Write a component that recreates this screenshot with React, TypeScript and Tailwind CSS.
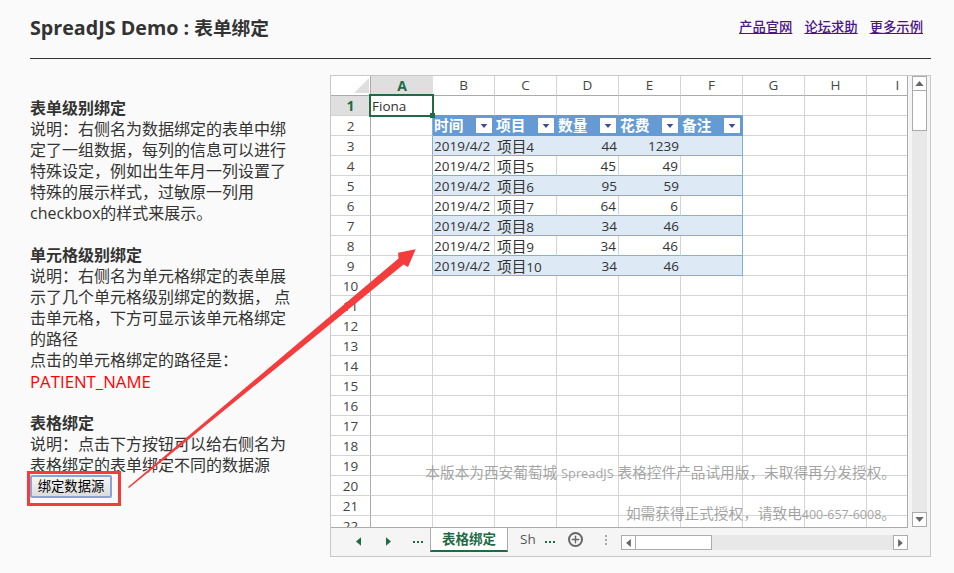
import { Plus } from "lucide-react";

const columns = ["A", "B", "C", "D", "E", "F", "G", "H", "I"];

const tableRows = [
  ["4", "44", "1239"],
  ["5", "45", "49"],
  ["6", "95", "59"],
  ["7", "64", "6"],
  ["8", "34", "46"],
  ["9", "34", "46"],
  ["10", "34", "46"],
];

const headers = ["时间", "项目", "数量", "花费", "备注"];

// full-width punctuation, as in the page
const COLON = "\uFF1A";
const COMMA = "\uFF0C";
const STOP = "\u3002";

function Triangle({ dir, className }: { dir: "left" | "right" | "up" | "down"; className: string }) {
  const points = {
    left: "6,0 6,10 0,5",
    right: "0,0 0,10 6,5",
    up: "0,6 10,6 5,0",
    down: "0,0 10,0 5,6",
  }[dir];
  const box = dir === "left" || dir === "right" ? "0 0 6 10" : "0 0 10 6";
  return (
    <svg viewBox={box} className={className} fill="currentColor">
      <polygon points={points} />
    </svg>
  );
}

function ScrollButton({ dir, className = "" }: { dir: "left" | "right" | "up" | "down"; className?: string }) {
  const horizontal = dir === "left" || dir === "right";
  return (
    <div className={`flex items-center justify-center bg-white border border-[#ababab] text-[#666] shrink-0 ${className}`}>
      <Triangle dir={dir} className={horizontal ? "w-[5px] h-[8px]" : "w-[9px] h-[5px]"} />
    </div>
  );
}

function FilterButton() {
  return (
    <span className="absolute right-[3px] top-[2px] w-[16px] h-[15px] bg-white flex items-center justify-center text-[#3f4f8f]">
      <Triangle dir="down" className="w-[8px] h-[4px]" />
    </span>
  );
}

function Cell({ row, col }: { row: number; col: number }) {
  const inTable = row >= 2 && row <= 9 && col >= 1 && col <= 5;
  const stripe = row % 2 === 1;

  if (row === 1 && col === 0) {
    return (
      <div className="relative border-r border-b border-[#d4d4d4] text-[13.5px] leading-[20px] pl-[1px] text-[#333]">
        Fiona
        <div className="absolute left-[-2px] top-[-2px] w-[65px] h-[23px] border-2 border-[#1f6b45] z-10">
          <span className="absolute right-[-3px] bottom-[-3px] w-[5px] h-[5px] bg-[#1f6b45]" />
        </div>
      </div>
    );
  }

  if (!inTable) {
    const blueRight = col === 0 && row >= 2 && row <= 9;
    const blueBottom = row === 1 && col >= 1 && col <= 5;
    return (
      <div
        className={`border-r border-b ${blueRight ? "border-r-[#86aedb]" : "border-r-[#d4d4d4]"} ${
          blueBottom ? "border-b-[#659bd5]" : "border-b-[#d4d4d4]"
        }`}
      />
    );
  }

  if (row === 2) {
    return (
      <div className="relative bg-[#659bd5] text-white font-bold text-[14.67px] leading-[19px] pl-[1px]">
        {headers[col - 1]}
        <FilterButton />
      </div>
    );
  }

  const data = tableRows[row - 3];
  const bg = stripe ? "bg-[#dde9f5]" : "bg-white";
  const right = col === 5 ? "border-r border-r-[#86aedb]" : stripe ? "" : "border-r border-r-[#d4d4d4]";
  const base = `${bg} ${right} border-b border-b-[#86aedb] leading-[20px] text-[#333] whitespace-nowrap overflow-hidden`;

  if (col === 1) return <div className={`${base} text-[13.5px] pl-[1px]`}>2019/4/2</div>;
  if (col === 2) {
    return (
      <div className={`${base} text-[13.5px] pl-[2px]`}>
        <span className="text-[14.67px]">项目</span>
        {data[0]}
      </div>
    );
  }
  if (col === 3) return <div className={`${base} text-[13.5px] text-right pr-[2px]`}>{data[1]}</div>;
  if (col === 4) return <div className={`${base} text-[13.5px] text-right pr-[2px]`}>{data[2]}</div>;
  return <div className={base} />;
}

function Sheet() {
  return (
    <div className="relative w-[577px] h-[452px] overflow-hidden bg-white border-b border-[#ababab] border-r shrink-0">
      <div className="grid grid-cols-[40px_repeat(9,62px)] auto-rows-[20px] w-[598px] text-[#444]">
        <div className="relative border-r border-b border-[#ababab] bg-white">
          <div className="absolute right-[1px] bottom-[2px] w-0 h-0 border-l-[15px] border-l-transparent border-b-[15px] border-b-[#dfdfdf]" />
        </div>
        {columns.map((c) => (
          <div
            key={c}
            className={
              c === "A"
                ? "bg-[#dfdfdf] border-b border-[#ababab] text-center text-[14px] leading-[19px] font-bold text-[#1f6b45]"
                : "border-r border-b border-r-[#d4d4d4] border-b-[#ababab] text-center text-[13.5px] leading-[19px]"
            }
          >
            {c}
          </div>
        ))}
        {Array.from({ length: 22 }, (_, i) => i + 1).map((row) => (
          <div key={row} className="contents">
            <div
              className={
                row === 1
                  ? "bg-[#dfdfdf] border-r border-b border-r-[#ababab] border-b-[#d4d4d4] text-center text-[14px] leading-[20px] font-bold text-[#1f6b45]"
                  : "border-r border-b border-r-[#ababab] border-b-[#d4d4d4] text-center text-[13.5px] leading-[20px]"
              }
            >
              {row}
            </div>
            {columns.map((_, col) => (
              <Cell key={col} row={row} col={col} />
            ))}
          </div>
        ))}
      </div>
      <div className="absolute right-[11px] top-[386px] text-right text-[14.67px] leading-[20px] text-[#8c8c8c]/80 whitespace-nowrap">
        <div>
          本版本为西安葡萄城 <span className="text-[12.8px]">SpreadJS</span> {`表格控件产品试用版${COMMA}未取得再分发授权${STOP}`}
        </div>
        <div className="mt-[20px]">
          {`如需获得正式授权${COMMA}请致电`}
          <span className="text-[12.5px]">400-657-6008</span>
          {STOP}
        </div>
      </div>
    </div>
  );
}

function TabStrip() {
  return (
    <div className="flex items-start h-[28px] bg-[#f5f5f5] text-[#1f6b45]">
      <div className="flex items-center w-[99px] h-[27px] pl-[25px] shrink-0">
        <Triangle dir="left" className="w-[5px] h-[9px]" />
        <Triangle dir="right" className="w-[5px] h-[9px] ml-[25px]" />
        <span className="ml-[22px] flex gap-[2px]">
          <i className="w-[2px] h-[2px] bg-[#1f6b45]" />
          <i className="w-[2px] h-[2px] bg-[#1f6b45]" />
          <i className="w-[2px] h-[2px] bg-[#1f6b45]" />
        </span>
      </div>
      <div className="w-[78px] h-[25px] -mt-px bg-white border-l border-r border-[#ababab] border-b-2 border-b-[#1f6b45] text-center text-[13.5px] font-semibold leading-[25px] shrink-0">
        表格绑定
      </div>
      <div className="w-[37px] pl-[12px] text-[13.5px] leading-[23px] text-[#555] shrink-0">Sh</div>
      <span className="flex gap-[2px] mt-[13px] shrink-0">
        <i className="w-[2px] h-[2px] bg-[#1f6b45]" />
        <i className="w-[2px] h-[2px] bg-[#1f6b45]" />
        <i className="w-[2px] h-[2px] bg-[#1f6b45]" />
      </span>
      <span className="ml-[13px] mt-[4px] w-[15px] h-[15px] rounded-full border-2 border-[#666] flex items-center justify-center text-[#666] shrink-0">
        <Plus size={11} strokeWidth={3} />
      </span>
      <span className="ml-[22px] mt-[7px] flex flex-col gap-[2px] shrink-0">
        <i className="w-[2px] h-[2px] bg-[#aaa]" />
        <i className="w-[2px] h-[2px] bg-[#aaa]" />
        <i className="w-[2px] h-[2px] bg-[#aaa]" />
      </span>
      <div className="ml-[14px] mt-[7px] flex w-[287px] h-[15px] bg-[#e8e8e8] shrink-0">
        <ScrollButton dir="left" className="w-[15px] h-[15px]" />
        <div className="w-[76px] h-[15px] bg-white border border-[#ababab] border-l-0" />
        <div className="flex-1" />
        <ScrollButton dir="right" className="w-[15px] h-[15px]" />
      </div>
    </div>
  );
}

function VerticalScroll() {
  return (
    <div className="ml-[4px] mr-[3px] w-[15px] h-[451px] flex flex-col bg-[#e8e8e8] shrink-0">
      <ScrollButton dir="up" className="w-[15px] h-[15px]" />
      <div className="w-[15px] h-[40px] bg-white border border-[#ababab] border-t-0" />
      <div className="flex-1" />
      <ScrollButton dir="down" className="w-[15px] h-[15px]" />
    </div>
  );
}

export default function App() {
  return (
    <div className="relative w-[954px] h-[573px] overflow-hidden bg-[#fafafa] text-[#333] font-['Open_Sans','Noto_Sans_CJK_SC',sans-serif]">
      <div className="w-[931px] pl-[30px]">
        <header className="flex items-start justify-between h-[59px] border-b border-[#333] pr-[8px]">
          <h1 className="mt-[14px] text-[19.7px] leading-[28px] font-bold">
            SpreadJS Demo : <span className="text-[18.67px]">表单绑定</span>
          </h1>
          <nav className="flex gap-[12px] mt-[18px] text-[13.33px] leading-[18px] font-medium text-[#4b1488]">
            <a href="#" className="underline">产品官网</a>
            <a href="#" className="underline">论坛求助</a>
            <a href="#" className="underline">更多示例</a>
          </nav>
        </header>

        <div className="flex">
          <aside className="w-[300px] pt-[39px] text-[16px] leading-[21px] shrink-0">
            <div className="w-[262px]">
              <h2 className="font-semibold">表单级别绑定</h2>
              <p>{`说明${COLON}右侧名为数据绑定的表单中绑定了一组数据${COMMA}每列的信息可以进行特殊设定${COMMA}例如出生年月一列设置了特殊的展示样式${COMMA}过敏原一列用checkbox的样式来展示${STOP}`}</p>

              <h2 className="font-semibold mt-[21px]">单元格级别绑定</h2>
              <p>{`说明${COLON}右侧名为单元格绑定的表单展示了几个单元格级别绑定的数据${COMMA} 点击单元格${COMMA}下方可显示该单元格绑定的路径`}</p>
              <p>{`点击的单元格绑定的路径是${COLON}`}</p>
              <p className="text-[#ff0000] text-[16.8px]">PATIENT_NAME</p>

              <h2 className="font-semibold mt-[21px]">表格绑定</h2>
              <p>{`说明${COLON}点击下方按钮可以给右侧名为表格绑定的表单绑定不同的数据源`}</p>
              <button className="block w-[82px] h-[23px] mt-[-1px] rounded-[2px] border-2 border-[#8aa4d8] bg-linear-to-b from-[#f5f5f5] to-[#dcdcdc] text-[13.33px] leading-[19px] text-black text-center">
                绑定数据源
              </button>
            </div>
          </aside>

          <section className="mt-[16px] w-[601px] h-[482px] border border-[#c8c8c8] bg-[#f5f5f5] flex flex-col shrink-0">
            <div className="flex">
              <Sheet />
              <VerticalScroll />
            </div>
            <TabStrip />
          </section>
        </div>
      </div>

      <svg viewBox="0 0 954 573" className="absolute inset-0 w-[954px] h-[573px] pointer-events-none">
        <rect x="28.5" y="472.5" width="91" height="32" fill="none" stroke="#f53c3c" strokeWidth="3" />
        <polygon
          points="128,487 398.5,258.5 398,252.7 415.7,249.3 408,267 403.5,264.5 129,488"
          fill="#f53c3c"
        />
      </svg>
    </div>
  );
}
